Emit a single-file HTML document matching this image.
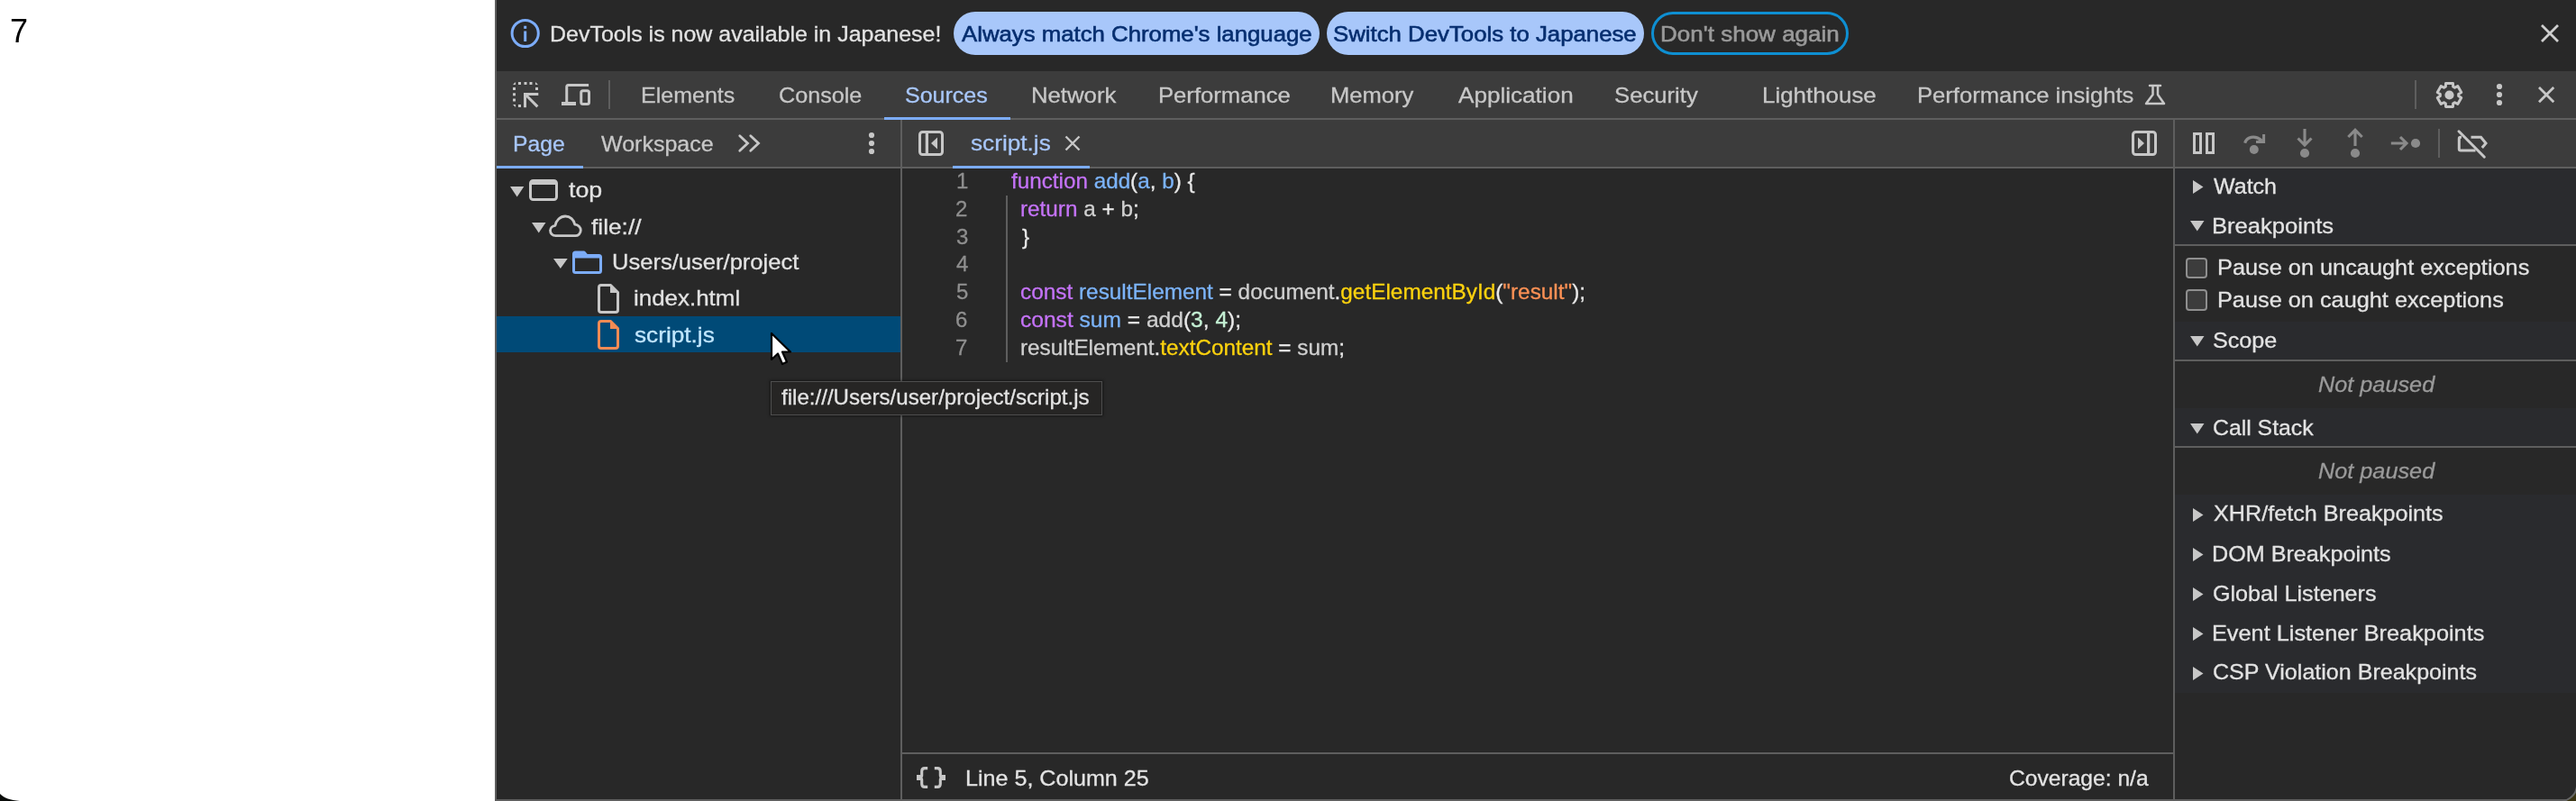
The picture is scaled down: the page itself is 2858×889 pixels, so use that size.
<!DOCTYPE html>
<html><head><meta charset="utf-8">
<style>
html,body{margin:0;padding:0;}
body{width:2858px;height:889px;overflow:hidden;position:relative;background:#fff;font-family:"Liberation Sans",sans-serif;}
.a{position:absolute;}
.t{position:absolute;white-space:pre;line-height:normal;font-family:"Liberation Sans",sans-serif;-webkit-font-smoothing:antialiased;will-change:transform;transform-origin:0 0;}
svg.a{overflow:visible;}
</style></head><body>
<div class="t" style="left:11px;top:14px;font-size:36px;color:#000">7</div>

<!-- devtools frame -->
<div class="a" style="left:549px;top:0;width:2309px;height:889px;background:#282828;"></div>
<div class="a" style="left:549px;top:0;width:2px;height:889px;background:#5e5e5e;"></div>
<!-- infobar -->
<div class="a" style="left:551px;top:0;width:2307px;height:79px;background:#282828;"></div>
<!-- main toolbar -->
<div class="a" style="left:551px;top:79px;width:2307px;height:52px;background:#3c3c3c;"></div>
<div class="a" style="left:551px;top:131px;width:2307px;height:2px;background:#5e5e5e;"></div>
<div class="a" style="left:981px;top:130px;width:140px;height:3px;background:#7cacf8;"></div>
<!-- sub toolbars -->
<div class="a" style="left:551px;top:133px;width:2307px;height:52px;background:#3c3c3c;"></div>
<div class="a" style="left:551px;top:185px;width:2307px;height:2px;background:#5e5e5e;"></div>
<div class="a" style="left:551px;top:184px;width:96px;height:3px;background:#7cacf8;"></div>
<div class="a" style="left:1057px;top:184px;width:152px;height:3px;background:#7cacf8;"></div>
<!-- vertical dividers -->
<div class="a" style="left:999px;top:133px;width:2px;height:754px;background:#5e5e5e;"></div>
<div class="a" style="left:2411px;top:133px;width:2px;height:754px;background:#5e5e5e;"></div>
<!-- selected tree row -->
<div class="a" style="left:551px;top:351px;width:448px;height:40px;background:#004a77;"></div>
<!-- status bar border -->
<div class="a" style="left:1001px;top:835px;width:1410px;height:2px;background:#5e5e5e;"></div>
<!-- bottom border -->
<div class="a" style="left:549px;top:887px;width:2309px;height:2px;background:#5e5e5e;"></div>

<!-- right sidebar section bg -->
<div class="a" style="left:2413px;top:187px;width:445px;height:84px;background:#2a2b2e;"></div>
<div class="a" style="left:2413px;top:271px;width:445px;height:2px;background:#5e5e5e;"></div>
<div class="a" style="left:2413px;top:357px;width:445px;height:42px;background:#2a2b2e;"></div>
<div class="a" style="left:2413px;top:399px;width:445px;height:2px;background:#5e5e5e;"></div>
<div class="a" style="left:2413px;top:453px;width:445px;height:42px;background:#2a2b2e;"></div>
<div class="a" style="left:2413px;top:495px;width:445px;height:2px;background:#5e5e5e;"></div>
<div class="a" style="left:2413px;top:549px;width:445px;height:220px;background:#2a2b2e;"></div>

<!-- infobar buttons -->
<div class="a" style="left:1058px;top:13px;width:406px;height:48px;border-radius:24px;background:#a8c7fa;"></div>
<div class="a" style="left:1472px;top:13px;width:352px;height:48px;border-radius:24px;background:#a8c7fa;"></div>
<div class="a" style="left:1832px;top:13px;width:213px;height:42px;border-radius:24px;border:3px solid #0e8fd2;"></div>

<!-- ICONS -->
<!-- info icon -->
<svg class="a" style="left:566px;top:21px" width="33" height="33" viewBox="0 0 33 33">
 <circle cx="16.7" cy="16" r="14.6" fill="none" stroke="#7cacf8" stroke-width="3"/>
 <rect x="15.2" y="13.5" width="3" height="11.5" fill="#7cacf8"/>
 <rect x="15.2" y="7.7" width="3" height="3.2" fill="#7cacf8"/>
</svg>
<!-- infobar close -->
<svg class="a" style="left:2817px;top:25px" width="24" height="24" viewBox="0 0 24 24">
 <path d="M3 3L21 21M21 3L3 21" stroke="#cfcfcf" stroke-width="2.8"/>
</svg>

<!-- inspect icon -->
<svg class="a" style="left:569px;top:91px" width="30" height="30" viewBox="0 0 30 30">
 <g fill="#c7c7c7">
  <path d="M0 3L3 0V3Z"/><rect x="6" y="0" width="3" height="3"/><rect x="12.5" y="0" width="3" height="3"/><rect x="18.5" y="0" width="3" height="3"/><path d="M25 0L28 3H25Z"/>
  <rect x="0" y="6" width="3" height="3"/><rect x="0" y="12.3" width="3" height="3"/><rect x="0" y="18.5" width="3" height="3"/><path d="M0 25H3V28Z"/>
  <rect x="6" y="25" width="3" height="3"/><rect x="25" y="6" width="3" height="3"/>
 </g>
 <path d="M12 12H28.3V15H17.1L28.4 26.3L26.3 28.4L15 17.1V28.3H12Z" fill="#c7c7c7"/>
</svg>
<!-- device icon -->
<svg class="a" style="left:623px;top:93px" width="33" height="25" viewBox="0 0 33 25">
 <path d="M30.1 1.5H7.5Q5.75 1.5 5.75 3.5V20" fill="none" stroke="#c7c7c7" stroke-width="3"/>
 <rect x="0" y="20" width="16" height="4" fill="#c7c7c7"/>
 <rect x="21.75" y="7.75" width="8.75" height="14.75" rx="2" fill="none" stroke="#c7c7c7" stroke-width="3"/>
</svg>
<div class="a" style="left:675px;top:89px;width:2px;height:32px;background:#5e5e5e;"></div>

<!-- flask -->
<svg class="a" style="left:2378px;top:92px" width="26" height="26" viewBox="0 0 26 26">
 <path d="M7 3H19M10.5 3V13L3 23H23L16 13V3" fill="none" stroke="#c7c7c7" stroke-width="2.5" stroke-linejoin="round" stroke-linecap="round"/>
</svg>
<div class="a" style="left:2679px;top:89px;width:2px;height:32px;background:#5e5e5e;"></div>
<!-- gear -->
<svg class="a" style="left:2701.5px;top:89.5px" width="31" height="31" viewBox="0 0 31 31">
 <path d="M10.40 6.67 L11.35 6.18 L11.52 2.49 L19.48 2.49 L19.65 6.18 L20.60 6.67 L21.50 7.25 L24.78 5.55 L28.75 12.44 L25.64 14.43 L25.70 15.50 L25.64 16.57 L28.75 18.56 L24.78 25.45 L21.50 23.75 L20.60 24.33 L19.65 24.82 L19.48 28.51 L11.52 28.51 L11.35 24.82 L10.40 24.33 L9.50 23.75 L6.22 25.45 L2.25 18.56 L5.36 16.57 L5.30 15.50 L5.36 14.43 L2.25 12.44 L6.22 5.55 L9.50 7.25Z" fill="none" stroke="#c7c7c7" stroke-width="3" stroke-linejoin="round"/>
 <circle cx="15.5" cy="15.5" r="5.1" fill="#c7c7c7"/>
</svg>
<!-- kebab main -->
<svg class="a" style="left:2768px;top:91px" width="10" height="28" viewBox="0 0 10 28">
 <circle cx="5" cy="5" r="3.1" fill="#c7c7c7"/><circle cx="5" cy="14" r="3.1" fill="#c7c7c7"/><circle cx="5" cy="23" r="3.1" fill="#c7c7c7"/>
</svg>
<!-- close main -->
<svg class="a" style="left:2815px;top:95px" width="20" height="20" viewBox="0 0 20 20">
 <path d="M2 2L18.25 18.25M18.25 2L2 18.25" stroke="#c7c7c7" stroke-width="2.8"/>
</svg>

<!-- >> icon -->
<svg class="a" style="left:815px;top:145px" width="32" height="28" viewBox="0 0 32 28">
 <path d="M5.75 5.75L14.5 14L5.75 22.25M17.75 5.75L26.5 14L17.75 22.25" fill="none" stroke="#c7c7c7" stroke-width="2.8" stroke-linecap="round"/>
</svg>
<!-- kebab sub -->
<svg class="a" style="left:962px;top:145px" width="10" height="28" viewBox="0 0 10 28">
 <circle cx="5" cy="5" r="3.1" fill="#c7c7c7"/><circle cx="5" cy="14" r="3.1" fill="#c7c7c7"/><circle cx="5" cy="23" r="3.1" fill="#c7c7c7"/>
</svg>
<!-- left sidebar toggle -->
<svg class="a" style="left:1019px;top:145px" width="28" height="28" viewBox="0 0 28 28">
 <rect x="1.5" y="1.5" width="25" height="25" rx="3" fill="none" stroke="#c7c7c7" stroke-width="3"/>
 <rect x="7.75" y="2" width="3.25" height="24" fill="#c7c7c7"/>
 <path d="M21 7.5V20.5L14 14Z" fill="#c7c7c7"/>
</svg>
<!-- tab close -->
<svg class="a" style="left:1180px;top:149px" width="20" height="20" viewBox="0 0 20 20">
 <path d="M2.5 2.5L17.5 17.5M17.5 2.5L2.5 17.5" stroke="#c7c7c7" stroke-width="2.4"/>
</svg>
<!-- right sidebar toggle -->
<svg class="a" style="left:2365px;top:145px" width="28" height="28" viewBox="0 0 28 28">
 <rect x="1.5" y="1.5" width="25" height="25" rx="3" fill="none" stroke="#c7c7c7" stroke-width="3"/>
 <rect x="17" y="2" width="3.25" height="24" fill="#c7c7c7"/>
 <path d="M7 7.5V20.5L14 14Z" fill="#c7c7c7"/>
</svg>
<!-- pause -->
<svg class="a" style="left:2433px;top:147px" width="25" height="25" viewBox="0 0 25 25">
 <rect x="1.5" y="1.5" width="7" height="21" fill="none" stroke="#c7c7c7" stroke-width="3"/>
 <rect x="15.5" y="1.5" width="7" height="21" fill="none" stroke="#c7c7c7" stroke-width="3"/>
</svg>
<!-- step over -->
<svg class="a" style="left:2485px;top:145px" width="32" height="30" viewBox="0 0 32 30">
 <path d="M5.7 13.8C7.5 7.5 16 4 24.5 11" fill="none" stroke="#8a8a8a" stroke-width="3.2"/>
 <path d="M26.6 4V12.5H18" fill="none" stroke="#8a8a8a" stroke-width="3"/>
 <circle cx="15.8" cy="21" r="5" fill="#8a8a8a"/>
</svg>
<!-- step into -->
<svg class="a" style="left:2545px;top:142px" width="24" height="34" viewBox="0 0 24 34">
 <path d="M12 1V19M4.5 11.5L12 19L19.5 11.5" fill="none" stroke="#8a8a8a" stroke-width="3.1" stroke-linejoin="miter"/>
 <circle cx="12" cy="28" r="5.1" fill="#8a8a8a"/>
</svg>
<!-- step out -->
<svg class="a" style="left:2601px;top:142px" width="24" height="34" viewBox="0 0 24 34">
 <path d="M12 20V3M4.3 10L12 2.3L19.7 10" fill="none" stroke="#8a8a8a" stroke-width="3.1"/>
 <circle cx="12" cy="28" r="5.1" fill="#8a8a8a"/>
</svg>
<!-- step -->
<svg class="a" style="left:2650px;top:147px" width="38" height="24" viewBox="0 0 38 24">
 <path d="M2.8 12H20.5M13 5L20 12L13 19" fill="none" stroke="#8a8a8a" stroke-width="3.1"/>
 <circle cx="30" cy="12" r="5.1" fill="#8a8a8a"/>
</svg>
<div class="a" style="left:2705px;top:143px;width:2px;height:32px;background:#5e5e5e;"></div>
<!-- deactivate breakpoints -->
<svg class="a" style="left:2724px;top:143px" width="36" height="34" viewBox="0 0 36 34">
 <path d="M7 9.3H6Q4.3 9.3 4.3 11V22.3Q4.3 24 6 24H22.5" fill="none" stroke="#c7c7c7" stroke-width="3" stroke-linejoin="round"/>
 <path d="M17.5 9.3H28.5L34 16L29.8 21" fill="none" stroke="#c7c7c7" stroke-width="3"/>
 <path d="M4 2.8L32.3 31.2" stroke="#c7c7c7" stroke-width="3" stroke-linecap="round"/>
</svg>

<!-- tree icons -->
<svg class="a" style="left:566px;top:207px" width="16" height="12" viewBox="0 0 16 12"><path d="M0 0H15.3L7.65 11.4Z" fill="#c7c7c7"/></svg>
<svg class="a" style="left:587px;top:199px" width="32" height="25" viewBox="0 0 32 25">
 <rect x="1.5" y="1.5" width="29" height="21" rx="3" fill="none" stroke="#c7c7c7" stroke-width="3"/>
 <rect x="2" y="2" width="28" height="4" fill="#c7c7c7"/>
</svg>
<svg class="a" style="left:590px;top:247px" width="16" height="12" viewBox="0 0 16 12"><path d="M0 0H15.5L7.75 11.4Z" fill="#c7c7c7"/></svg>
<svg class="a" style="left:609px;top:238px" width="37" height="26" viewBox="0 0 37 26">
 <path d="M7.5 23.7C4 23.7 1.5 21 1.5 18C1.5 15 3.8 12.6 7 12.3C8 6.8 12.5 2 18.2 2C23.5 2 27.8 5.8 28.8 11.2C32.5 11.5 35.3 14.5 35.3 17.6C35.3 21 32.6 23.7 29.2 23.7Z" fill="none" stroke="#c7c7c7" stroke-width="2.8" stroke-linejoin="round"/>
</svg>
<svg class="a" style="left:614px;top:287px" width="16" height="12" viewBox="0 0 16 12"><path d="M0 0H15.7L7.85 11Z" fill="#c7c7c7"/></svg>
<svg class="a" style="left:635px;top:279px" width="33" height="25" viewBox="0 0 33 25">
 <path d="M1.5 3Q1.5 1 3.5 1H13L16 4.5H29.5Q31.5 4.5 31.5 6.5V21.5Q31.5 23.5 29.5 23.5H3.5Q1.5 23.5 1.5 21.5Z" fill="none" stroke="#7cacf8" stroke-width="3" stroke-linejoin="round"/>
 <path d="M1.5 1.5H13L16 5H31V7.5H1.5Z" fill="#7cacf8"/>
</svg>
<svg class="a" style="left:663px;top:315px" width="25" height="33" viewBox="0 0 25 33">
 <path d="M1.5 4Q1.5 1.5 4 1.5H14.5L22.5 9.5V29Q22.5 31.5 20 31.5H4Q1.5 31.5 1.5 29Z" fill="none" stroke="#c7c7c7" stroke-width="3" stroke-linejoin="round"/>
 <path d="M14 1.5H15L23.5 10V10H14Z" fill="#c7c7c7"/>
</svg>
<svg class="a" style="left:663px;top:355px" width="25" height="33" viewBox="0 0 25 33">
 <path d="M1.5 4Q1.5 1.5 4 1.5H14.5L22.5 9.5V29Q22.5 31.5 20 31.5H4Q1.5 31.5 1.5 29Z" fill="none" stroke="#f28b54" stroke-width="3" stroke-linejoin="round"/>
 <path d="M14 1.5H15L23.5 10V10H14Z" fill="#f28b54"/>
</svg>

<!-- indent guide -->
<div class="a" style="left:1116px;top:217px;width:2px;height:185px;background:#5e5e5e;"></div>
<!-- format icon -->
<svg class="a" style="left:1010px;top:845px" width="46" height="36" viewBox="0 0 46 36">
 <g fill="none" stroke="#c7c7c7" stroke-width="3.1">
  <path d="M19.2 7.6H16Q12.7 7.6 12.7 11V15.5Q12.7 17.5 10.5 18Q12.7 18.5 12.7 20.5V25Q12.7 28.4 16 28.4H19.2"/>
  <path d="M26.8 7.6H30Q33.3 7.6 33.3 11V15.5Q33.3 17.5 35.5 18Q33.3 18.5 33.3 20.5V25Q33.3 28.4 30 28.4H26.8"/>
 </g>
 <rect x="7" y="15" width="4.5" height="6" fill="#c7c7c7"/>
 <rect x="34.5" y="15" width="4.5" height="6" fill="#c7c7c7"/>
</svg>

<!-- sidebar triangles -->
<svg class="a" style="left:2433px;top:200px" width="12" height="15" viewBox="0 0 12 15"><path d="M0 0L11.5 7.5L0 15Z" fill="#c7c7c7"/></svg>
<svg class="a" style="left:2429.5px;top:245px" width="16" height="12" viewBox="0 0 16 12"><path d="M0 0H15.5L7.75 11.5Z" fill="#c7c7c7"/></svg>
<svg class="a" style="left:2429.5px;top:373px" width="16" height="12" viewBox="0 0 16 12"><path d="M0 0H15.5L7.75 11.5Z" fill="#c7c7c7"/></svg>
<svg class="a" style="left:2429.5px;top:469.5px" width="16" height="12" viewBox="0 0 16 12"><path d="M0 0H15.5L7.75 11.5Z" fill="#c7c7c7"/></svg>
<svg class="a" style="left:2433px;top:564px" width="12" height="15" viewBox="0 0 12 15"><path d="M0 0L11.5 7.5L0 15Z" fill="#c7c7c7"/></svg>
<svg class="a" style="left:2433px;top:608px" width="12" height="15" viewBox="0 0 12 15"><path d="M0 0L11.5 7.5L0 15Z" fill="#c7c7c7"/></svg>
<svg class="a" style="left:2433px;top:652px" width="12" height="15" viewBox="0 0 12 15"><path d="M0 0L11.5 7.5L0 15Z" fill="#c7c7c7"/></svg>
<svg class="a" style="left:2433px;top:696px" width="12" height="15" viewBox="0 0 12 15"><path d="M0 0L11.5 7.5L0 15Z" fill="#c7c7c7"/></svg>
<svg class="a" style="left:2433px;top:740px" width="12" height="15" viewBox="0 0 12 15"><path d="M0 0L11.5 7.5L0 15Z" fill="#c7c7c7"/></svg>
<!-- checkboxes -->
<div class="a" style="left:2425px;top:285.5px;width:20px;height:19px;border:2px solid #8f8f8f;border-radius:4px;background:#3c3c3c;"></div>
<div class="a" style="left:2425px;top:321px;width:20px;height:19.5px;border:2px solid #8f8f8f;border-radius:4px;background:#3c3c3c;"></div>

<!-- tooltip -->
<div class="a" style="left:855px;top:423px;width:366px;height:36px;background:#262524;border:1px solid #4e4e4e;box-shadow:0 0 3px 1px rgba(0,0,0,0.45);"></div>
<div class="t" style="left:610.46px;top:24.00px;font-size:24.5px;color:#e3e3e3;transform:scaleX(1.0190);font-style:normal;font-weight:normal;-webkit-text-stroke:0.3px currentColor;">DevTools is now available in Japanese!</div>
<div class="t" style="left:1066.60px;top:24.20px;font-size:24.5px;color:#062e6f;transform:scaleX(1.0515);font-style:normal;font-weight:normal;-webkit-text-stroke:0.3px currentColor;-webkit-text-stroke:0.6px #062e6f;">Always match Chrome's language</div>
<div class="t" style="left:1479.25px;top:24.00px;font-size:24.5px;color:#062e6f;transform:scaleX(1.0521);font-style:normal;font-weight:normal;-webkit-text-stroke:0.3px currentColor;-webkit-text-stroke:0.6px #062e6f;">Switch DevTools to Japanese</div>
<div class="t" style="left:1841.88px;top:24.00px;font-size:24.5px;color:#9a9a9a;transform:scaleX(1.0620);font-style:normal;font-weight:normal;-webkit-text-stroke:0.3px currentColor;-webkit-text-stroke:0.6px #9a9a9a;">Don't show again</div>
<div class="t" style="left:710.96px;top:92.20px;font-size:24.5px;color:#c7c7c7;transform:scaleX(1.0213);font-style:normal;font-weight:normal;-webkit-text-stroke:0.3px currentColor;">Elements</div>
<div class="t" style="left:863.57px;top:92.20px;font-size:24.5px;color:#c7c7c7;transform:scaleX(1.0265);font-style:normal;font-weight:normal;-webkit-text-stroke:0.3px currentColor;">Console</div>
<div class="t" style="left:1003.98px;top:92.20px;font-size:24.5px;color:#a8c7fa;transform:scaleX(1.0211);font-style:normal;font-weight:normal;-webkit-text-stroke:0.3px currentColor;">Sources</div>
<div class="t" style="left:1143.50px;top:92.20px;font-size:24.5px;color:#c7c7c7;transform:scaleX(1.0496);font-style:normal;font-weight:normal;-webkit-text-stroke:0.3px currentColor;">Network</div>
<div class="t" style="left:1284.81px;top:92.20px;font-size:24.5px;color:#c7c7c7;transform:scaleX(1.0463);font-style:normal;font-weight:normal;-webkit-text-stroke:0.3px currentColor;">Performance</div>
<div class="t" style="left:1476.21px;top:92.20px;font-size:24.5px;color:#c7c7c7;transform:scaleX(1.0432);font-style:normal;font-weight:normal;-webkit-text-stroke:0.3px currentColor;">Memory</div>
<div class="t" style="left:1618.20px;top:92.20px;font-size:24.5px;color:#c7c7c7;transform:scaleX(1.0652);font-style:normal;font-weight:normal;-webkit-text-stroke:0.3px currentColor;">Application</div>
<div class="t" style="left:1791.25px;top:92.20px;font-size:24.5px;color:#c7c7c7;transform:scaleX(1.0481);font-style:normal;font-weight:normal;-webkit-text-stroke:0.3px currentColor;">Security</div>
<div class="t" style="left:1954.78px;top:92.20px;font-size:24.5px;color:#c7c7c7;transform:scaleX(1.0575);font-style:normal;font-weight:normal;-webkit-text-stroke:0.3px currentColor;">Lighthouse</div>
<div class="t" style="left:2126.91px;top:92.20px;font-size:24.5px;color:#c7c7c7;transform:scaleX(1.0444);font-style:normal;font-weight:normal;-webkit-text-stroke:0.3px currentColor;">Performance insights</div>
<div class="t" style="left:568.99px;top:146.00px;font-size:24.5px;color:#a8c7fa;transform:scaleX(1.0075);font-style:normal;font-weight:normal;-webkit-text-stroke:0.3px currentColor;">Page</div>
<div class="t" style="left:667.00px;top:146.00px;font-size:24.5px;color:#c7c7c7;transform:scaleX(1.0208);font-style:normal;font-weight:normal;-webkit-text-stroke:0.3px currentColor;">Workspace</div>
<div class="t" style="left:1077.00px;top:145.30px;font-size:24.5px;color:#a8c7fa;transform:scaleX(1.0690);font-style:normal;font-weight:normal;-webkit-text-stroke:0.3px currentColor;">script.js</div>
<div class="t" style="left:631.00px;top:196.75px;font-size:24.5px;color:#e3e3e3;transform:scaleX(1.0917);font-style:normal;font-weight:normal;-webkit-text-stroke:0.3px currentColor;">top</div>
<div class="t" style="left:655.50px;top:238.00px;font-size:24.5px;color:#e3e3e3;transform:scaleX(1.0725);font-style:normal;font-weight:normal;-webkit-text-stroke:0.3px currentColor;">file://</div>
<div class="t" style="left:678.96px;top:277.30px;font-size:24.5px;color:#e3e3e3;transform:scaleX(1.0430);font-style:normal;font-weight:normal;-webkit-text-stroke:0.3px currentColor;">Users/user/project</div>
<div class="t" style="left:702.54px;top:317.00px;font-size:24.5px;color:#e3e3e3;transform:scaleX(1.0584);font-style:normal;font-weight:normal;-webkit-text-stroke:0.3px currentColor;">index.html</div>
<div class="t" style="left:703.60px;top:357.50px;font-size:24.5px;color:#c2e7ff;transform:scaleX(1.0690);font-style:normal;font-weight:normal;-webkit-text-stroke:0.3px currentColor;">script.js</div>
<div class="t" style="left:867.20px;top:426.80px;font-size:24px;color:#e3e3e3;transform:scaleX(1.0044);font-style:normal;font-weight:normal;-webkit-text-stroke:0.3px currentColor;">file:///Users/user/project/script.js</div>
<div class="t" style="left:1061.00px;top:187.00px;font-size:24px;color:#8f8f8f;font-style:normal;font-weight:normal;-webkit-text-stroke:0.3px currentColor;text-align:left;">1</div>
<div class="t" style="left:1060.30px;top:217.80px;font-size:24px;color:#8f8f8f;font-style:normal;font-weight:normal;-webkit-text-stroke:0.3px currentColor;text-align:left;">2</div>
<div class="t" style="left:1061.30px;top:248.60px;font-size:24px;color:#8f8f8f;font-style:normal;font-weight:normal;-webkit-text-stroke:0.3px currentColor;text-align:left;">3</div>
<div class="t" style="left:1061.30px;top:279.40px;font-size:24px;color:#8f8f8f;font-style:normal;font-weight:normal;-webkit-text-stroke:0.3px currentColor;text-align:left;">4</div>
<div class="t" style="left:1061.30px;top:310.20px;font-size:24px;color:#8f8f8f;font-style:normal;font-weight:normal;-webkit-text-stroke:0.3px currentColor;text-align:left;">5</div>
<div class="t" style="left:1060.30px;top:341.00px;font-size:24px;color:#8f8f8f;font-style:normal;font-weight:normal;-webkit-text-stroke:0.3px currentColor;text-align:left;">6</div>
<div class="t" style="left:1060.30px;top:371.80px;font-size:24px;color:#8f8f8f;font-style:normal;font-weight:normal;-webkit-text-stroke:0.3px currentColor;text-align:left;">7</div>
<div class="t" style="left:1070.55px;top:850.00px;font-size:24.5px;color:#e3e3e3;transform:scaleX(1.0244);font-style:normal;font-weight:normal;-webkit-text-stroke:0.3px currentColor;">Line 5, Column 25</div>
<div class="t" style="left:2229.00px;top:849.80px;font-size:24.5px;color:#e3e3e3;transform:scaleX(1.0047);font-style:normal;font-weight:normal;-webkit-text-stroke:0.3px currentColor;">Coverage: n/a</div>
<div class="t" style="left:2456.00px;top:193.10px;font-size:24.5px;color:#e3e3e3;transform:scaleX(1.0221);font-style:normal;font-weight:normal;-webkit-text-stroke:0.3px currentColor;">Watch</div>
<div class="t" style="left:2453.91px;top:237.20px;font-size:24.5px;color:#e3e3e3;transform:scaleX(1.0446);font-style:normal;font-weight:normal;-webkit-text-stroke:0.3px currentColor;">Breakpoints</div>
<div class="t" style="left:2454.97px;top:364.40px;font-size:24.5px;color:#e3e3e3;transform:scaleX(1.0259);font-style:normal;font-weight:normal;-webkit-text-stroke:0.3px currentColor;">Scope</div>
<div class="t" style="left:2454.99px;top:460.50px;font-size:24.5px;color:#e3e3e3;transform:scaleX(1.0124);font-style:normal;font-weight:normal;-webkit-text-stroke:0.3px currentColor;">Call Stack</div>
<div class="t" style="left:2456.00px;top:556.40px;font-size:24.5px;color:#e3e3e3;transform:scaleX(1.0275);font-style:normal;font-weight:normal;-webkit-text-stroke:0.3px currentColor;">XHR/fetch Breakpoints</div>
<div class="t" style="left:2453.95px;top:600.80px;font-size:24.5px;color:#e3e3e3;transform:scaleX(1.0272);font-style:normal;font-weight:normal;-webkit-text-stroke:0.3px currentColor;">DOM Breakpoints</div>
<div class="t" style="left:2454.97px;top:645.20px;font-size:24.5px;color:#e3e3e3;transform:scaleX(1.0251);font-style:normal;font-weight:normal;-webkit-text-stroke:0.3px currentColor;">Global Listeners</div>
<div class="t" style="left:2453.93px;top:688.80px;font-size:24.5px;color:#e3e3e3;transform:scaleX(1.0325);font-style:normal;font-weight:normal;-webkit-text-stroke:0.3px currentColor;">Event Listener Breakpoints</div>
<div class="t" style="left:2454.98px;top:732.40px;font-size:24.5px;color:#e3e3e3;transform:scaleX(1.0229);font-style:normal;font-weight:normal;-webkit-text-stroke:0.3px currentColor;">CSP Violation Breakpoints</div>
<div class="t" style="left:2459.93px;top:283.20px;font-size:24.5px;color:#e3e3e3;transform:scaleX(1.0336);font-style:normal;font-weight:normal;-webkit-text-stroke:0.3px currentColor;">Pause on uncaught exceptions</div>
<div class="t" style="left:2459.94px;top:319.10px;font-size:24.5px;color:#e3e3e3;transform:scaleX(1.0325);font-style:normal;font-weight:normal;-webkit-text-stroke:0.3px currentColor;">Pause on caught exceptions</div>
<div class="t" style="left:2572.00px;top:413.20px;font-size:24.5px;color:#9a9a9a;transform:scaleX(1.0309);font-style:italic;font-weight:normal;-webkit-text-stroke:0.3px currentColor;">Not paused</div>
<div class="t" style="left:2572.00px;top:509.00px;font-size:24.5px;color:#9a9a9a;transform:scaleX(1.0309);font-style:italic;font-weight:normal;-webkit-text-stroke:0.3px currentColor;">Not paused</div>
<div class="t" style="left:1122.00px;top:187.00px;font-size:24px;transform:scaleX(1.0102);-webkit-text-stroke:0.3px currentColor;"><span style="color:#c573f8">function</span><span style="color:#e8e8e8"> </span><span style="color:#7cb4fa">add</span><span style="color:#e8e8e8">(</span><span style="color:#7cb4fa">a</span><span style="color:#e8e8e8">, </span><span style="color:#7cb4fa">b</span><span style="color:#e8e8e8">) {</span></div>
<div class="t" style="left:1132.49px;top:217.80px;font-size:24px;transform:scaleX(1.0117);-webkit-text-stroke:0.3px currentColor;"><span style="color:#c573f8">return</span><span style="color:#e8e8e8"> </span><span style="color:#d0d0d0">a</span><span style="color:#e8e8e8"> + </span><span style="color:#d0d0d0">b</span><span style="color:#e8e8e8">;</span></div>
<div class="t" style="left:1134.00px;top:248.60px;font-size:24px;transform:scaleX(1.0000);-webkit-text-stroke:0.3px currentColor;"><span style="color:#e8e8e8">}</span></div>
<div class="t" style="left:1132.49px;top:310.20px;font-size:24px;transform:scaleX(1.0146);-webkit-text-stroke:0.3px currentColor;"><span style="color:#c573f8">const</span><span style="color:#e8e8e8"> </span><span style="color:#7cb4fa">resultElement</span><span style="color:#e8e8e8"> = </span><span style="color:#d0d0d0">document</span><span style="color:#e8e8e8">.</span><span style="color:#fdd20e">getElementById</span><span style="color:#e8e8e8">(</span><span style="color:#fd9155">"result"</span><span style="color:#e8e8e8">);</span></div>
<div class="t" style="left:1132.48px;top:341.00px;font-size:24px;transform:scaleX(1.0233);-webkit-text-stroke:0.3px currentColor;"><span style="color:#c573f8">const</span><span style="color:#e8e8e8"> </span><span style="color:#7cb4fa">sum</span><span style="color:#e8e8e8"> = </span><span style="color:#d0d0d0">add</span><span style="color:#e8e8e8">(</span><span style="color:#c4f0d4">3</span><span style="color:#e8e8e8">, </span><span style="color:#c4f0d4">4</span><span style="color:#e8e8e8">);</span></div>
<div class="t" style="left:1132.49px;top:371.80px;font-size:24px;transform:scaleX(1.0124);-webkit-text-stroke:0.3px currentColor;"><span style="color:#d0d0d0">resultElement</span><span style="color:#e8e8e8">.</span><span style="color:#fdd20e">textContent</span><span style="color:#e8e8e8"> = </span><span style="color:#d0d0d0">sum</span><span style="color:#e8e8e8">;</span></div>

<!-- cursor -->
<svg class="a" style="left:853px;top:368px" width="28" height="40" viewBox="0 0 28 40">
 <path d="M3 2V31L10 24.5L15 36L20 33.8L15 22.5H24Z" fill="#fff" stroke="#000" stroke-width="2.2" stroke-linejoin="round"/>
</svg>
<!-- window corners -->
<svg class="a" style="left:0;top:869px" width="40" height="20" viewBox="0 0 40 20">
 <path d="M0 12C5 17 11 19 22 20H0Z" fill="#0a0c0a"/>
</svg>
<svg class="a" style="left:2818px;top:849px" width="40" height="40" viewBox="0 0 40 40">
 <path d="M41 24Q39 39 18 42V41H41Z" fill="#3a3413"/>
 <path d="M41 24Q39 39 18 42" fill="none" stroke="#666" stroke-width="2"/>
</svg>
</body></html>
